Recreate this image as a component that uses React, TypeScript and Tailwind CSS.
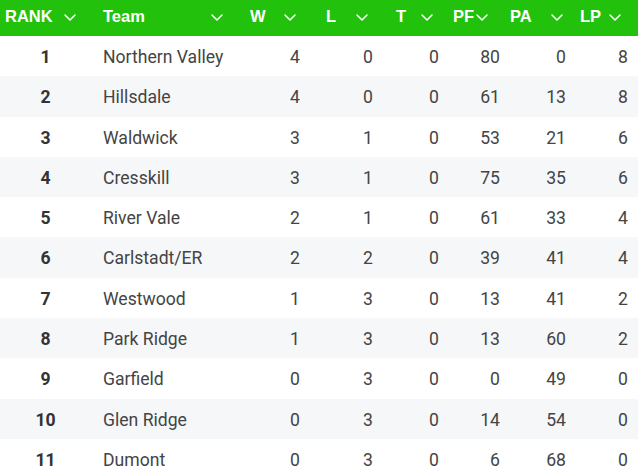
import { ChevronDown } from "lucide-react";

type Row = {
  rank: number;
  team: string;
  w: number;
  l: number;
  t: number;
  pf: number;
  pa: number;
  lp: number;
};

const rows: Row[] = [
  { rank: 1, team: "Northern Valley", w: 4, l: 0, t: 0, pf: 80, pa: 0, lp: 8 },
  { rank: 2, team: "Hillsdale", w: 4, l: 0, t: 0, pf: 61, pa: 13, lp: 8 },
  { rank: 3, team: "Waldwick", w: 3, l: 1, t: 0, pf: 53, pa: 21, lp: 6 },
  { rank: 4, team: "Cresskill", w: 3, l: 1, t: 0, pf: 75, pa: 35, lp: 6 },
  { rank: 5, team: "River Vale", w: 2, l: 1, t: 0, pf: 61, pa: 33, lp: 4 },
  { rank: 6, team: "Carlstadt/ER", w: 2, l: 2, t: 0, pf: 39, pa: 41, lp: 4 },
  { rank: 7, team: "Westwood", w: 1, l: 3, t: 0, pf: 13, pa: 41, lp: 2 },
  { rank: 8, team: "Park Ridge", w: 1, l: 3, t: 0, pf: 13, pa: 60, lp: 2 },
  { rank: 9, team: "Garfield", w: 0, l: 3, t: 0, pf: 0, pa: 49, lp: 0 },
  { rank: 10, team: "Glen Ridge", w: 0, l: 3, t: 0, pf: 14, pa: 54, lp: 0 },
  { rank: 11, team: "Dumont", w: 0, l: 3, t: 0, pf: 6, pa: 68, lp: 0 },
];

// header cells: label, padding-left, padding-right (to chevron's right edge)
const headers = [
  { label: "RANK", cls: "pl-[5px] pr-[19px]" },
  { label: "Team", cls: "pl-[8px] pr-[17px]" },
  { label: "W", cls: "pl-[10px] pr-[22px]" },
  { label: "L", cls: "pl-[8px] pr-[20px]" },
  { label: "T", cls: "pl-[8px] pr-[13px]" },
  { label: "PF", cls: "pl-[7px] pr-[18px]" },
  { label: "PA", cls: "pl-[4px] pr-[9px]" },
  { label: "LP", cls: "pl-[8px] pr-[17px]" },
];

const grid = "grid grid-cols-[95px_145px_78px_70px_58px_60px_66px_66px]";

function Chevron() {
  return (
    <svg width="12" height="7" viewBox="0 0 12 7" className="shrink-0 mt-[2px]">
      <polyline points="1,1 6,6 11,1" fill="none" stroke="white" strokeWidth="1.5" strokeLinecap="round" strokeLinejoin="round" />
    </svg>
  );
}

export default function App() {
  return (
    <div className="w-[638px] h-[476px] overflow-hidden bg-white font-['Roboto',sans-serif]">
      <div className={`${grid} h-[36px] bg-[#22c10b]`}>
        {headers.map((h) => (
          <div key={h.label} className={`flex items-center pb-[4px] ${h.cls}`}>
            <span className="font-['Liberation_Sans',Arial,sans-serif] font-bold text-[16.5px] text-white leading-none">
              {h.label}
            </span>
            <span className="ml-auto flex">
              <Chevron />
            </span>
          </div>
        ))}
      </div>

      {rows.map((r) => (
        <div
          key={r.rank}
          className={`${grid} h-[40.3px] items-center pt-[2px] text-[17.6px] text-[#444] ${r.rank % 2 === 0 ? "bg-[#f6f7f9]" : "bg-white"}`}
        >
          <div className="pr-[4px] text-center font-bold text-[#333]">{r.rank}</div>
          <div className="pl-[8px] whitespace-nowrap">{r.team}</div>
          <div className="pr-[18px] text-right">{r.w}</div>
          <div className="pr-[15px] text-right">{r.l}</div>
          <div className="pr-[7px] text-right">{r.t}</div>
          <div className="pr-[6px] text-right">{r.pf}</div>
          <div className="pr-[6px] text-right">{r.pa}</div>
          <div className="pr-[10px] text-right">{r.lp}</div>
        </div>
      ))}
    </div>
  );
}
